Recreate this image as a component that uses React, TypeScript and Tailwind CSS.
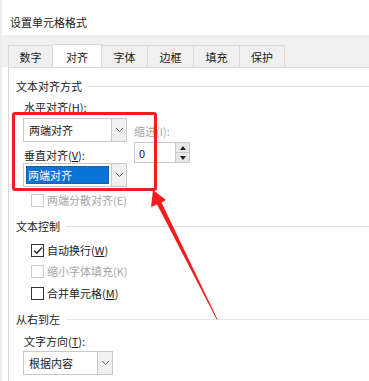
import React from "react";

const FONT = { fontFamily: '"Noto Sans CJK SC", "Noto Sans", sans-serif' };

function Chevron() {
  return (
    <svg width="9" height="6" viewBox="0 0 9 6">
      <path d="M1 1 L4.5 4.5 L8 1" fill="none" stroke="#606060" strokeWidth="1" />
    </svg>
  );
}

function Combo({ text, width, selected }: { text: string; width: number; selected?: boolean }) {
  return (
    <div className="flex h-[24px] border border-[#c8c8c8] bg-white" style={{ width }}>
      <div className="flex flex-1 items-center p-[2px]">
        {selected ? (
          <div className="flex h-full w-full items-center border border-dotted border-[#1c4f8c] bg-[#0a73d6] pl-[1px] text-white">
            {text}
          </div>
        ) : (
          <span className="pl-[3px]">{text}</span>
        )}
      </div>
      <div className="flex w-[15px] items-center justify-center border-l border-[#c8c8c8] bg-[#f0f0f0]">
        <Chevron />
      </div>
    </div>
  );
}

function Check({ label, checked, disabled }: { label: React.ReactNode; checked?: boolean; disabled?: boolean }) {
  return (
    <div className={`flex h-[16px] items-center gap-[3px] pl-[15px] ${disabled ? "text-[#a5a5a5]" : "text-[#1a1a1a]"}`}>
      <div
        className={`flex h-[13px] w-[13px] items-center justify-center border bg-white ${
          disabled ? "border-[#cdcdcd]" : "border-[#333]"
        }`}
      >
        {checked && (
          <svg width="10" height="9" viewBox="0 0 10 9">
            <path d="M1 4.5 L3.8 7.3 L9 1.5" fill="none" stroke="#222" strokeWidth="1.3" />
          </svg>
        )}
      </div>
      <span>{label}</span>
    </div>
  );
}

function Section({ title }: { title: string }) {
  return (
    <div className="flex h-[16px] items-center">
      <span className="text-[#1a1a1a]">{title}</span>
      <div className="ml-[6px] h-px flex-1 bg-[#e3e3e3]" />
    </div>
  );
}

const tabs = [
  { t: "数字", w: 45 },
  { t: "对齐", w: 50, active: true },
  { t: "字体", w: 47 },
  { t: "边框", w: 47 },
  { t: "填充", w: 47 },
  { t: "保护", w: 46 },
];

export default function App() {
  return (
    <div className="relative h-[381px] w-[369px] overflow-hidden bg-white text-[11px] leading-[16px]" style={FONT}>
      {/* left edge of the window */}
      <div className="flex h-full">
        <div className="w-[2px] bg-[#ececec]" />
        <div className="flex flex-1 flex-col">
          {/* title */}
          <div className="h-[35px] pl-[8px] pt-[14px] text-[#1a1a1a]">设置单元格格式</div>

          {/* tab strip */}
          <div className="flex h-[32px] items-end bg-[#f0f0f0] pl-[7px]">
            {tabs.map((tab) =>
              tab.active ? (
                <div
                  key={tab.t}
                  className="-mb-px -ml-px flex h-[24px] items-center justify-center border border-b-0 border-[#d9d9d9] bg-white text-[#1a1a1a]"
                  style={{ width: tab.w }}
                >
                  {tab.t}
                </div>
              ) : (
                <div
                  key={tab.t}
                  className="-ml-px flex h-[22px] items-center justify-center border border-b-0 border-[#d9d9d9] bg-[#f0f0f0] text-[#1a1a1a]"
                  style={{ width: tab.w }}
                >
                  {tab.t}
                </div>
              )
            )}
          </div>

          {/* page */}
          <div className="ml-[6px] flex flex-1 flex-col border-l border-t border-[#d9d9d9] bg-white pl-[7px] pt-[10px] text-[#1a1a1a]">
            <Section title="文本对齐方式" />
            <div className="mt-[5px] pl-[8px]">
              水平对齐(<span className="underline">H</span>):
            </div>
            <div className="mt-[3px] flex pl-[7px]">
              <div className="flex flex-col">
                <Combo text="两端对齐" width={104} />
                <div className="mt-[5px] h-[16px] pl-[1px]">
                  垂直对齐(<span className="underline">V</span>):
                </div>
                <Combo text="两端对齐" width={104} selected />
              </div>
              <div className="ml-[7px] flex flex-col">
                <div className="mt-[5px] h-[16px] text-[#a5a5a5]">缩进(I):</div>
                <div className="mt-[3px] flex h-[21px] w-[56px] border border-[#c8c8c8] bg-white">
                  <div className="flex flex-1 items-center pl-[4px] text-[#1a1a1a]">0</div>
                  <div className="flex w-[14px] flex-col border-l border-[#c8c8c8]">
                    <div className="flex flex-1 items-center justify-center border-b border-[#c8c8c8] bg-[#e8e8e8]">
                      <svg width="6" height="4" viewBox="0 0 6 4">
                        <path d="M0 4 L3 0 L6 4 Z" fill="#222" />
                      </svg>
                    </div>
                    <div className="flex flex-1 items-center justify-center bg-[#e8e8e8]">
                      <svg width="6" height="4" viewBox="0 0 6 4">
                        <path d="M0 0 L6 0 L3 4 Z" fill="#222" />
                      </svg>
                    </div>
                  </div>
                </div>
              </div>
            </div>
            <div className="mt-[5px]">
              <Check label="两端分散对齐(E)" disabled />
            </div>

            <div className="mt-[10px]">
              <Section title="文本控制" />
            </div>
            <div className="mt-[8px]">
              <Check
                checked
                label={
                  <>
                    自动换行(<span className="underline">W</span>)
                  </>
                }
              />
            </div>
            <div className="mt-[5px]">
              <Check label="缩小字体填充(K)" disabled />
            </div>
            <div className="mt-[6px]">
              <Check
                label={
                  <>
                    合并单元格(<span className="underline">M</span>)
                  </>
                }
              />
            </div>

            <div className="mt-[10px]">
              <Section title="从右到左" />
            </div>
            <div className="mt-[6px] pl-[8px]">
              文字方向(<span className="underline">T</span>):
            </div>
            <div className="mt-[2px] pl-[7px]">
              <Combo text="根据内容" width={90} />
            </div>
          </div>
        </div>
      </div>

      {/* red annotation box */}
      <div className="pointer-events-none absolute left-[12px] top-[112px] h-[79px] w-[145px] rounded-[3px] border-[3px] border-[#f41c1c]" />

      {/* red annotation arrow */}
      <svg className="pointer-events-none absolute left-0 top-0" width="369" height="381" viewBox="0 0 369 381">
        <polygon
          points="153,190 166,200 161.5,202.4 217.6,319.5 216.4,319 157.1,204.6 151,207"
          fill="#f41c1c"
        />
      </svg>
    </div>
  );
}
